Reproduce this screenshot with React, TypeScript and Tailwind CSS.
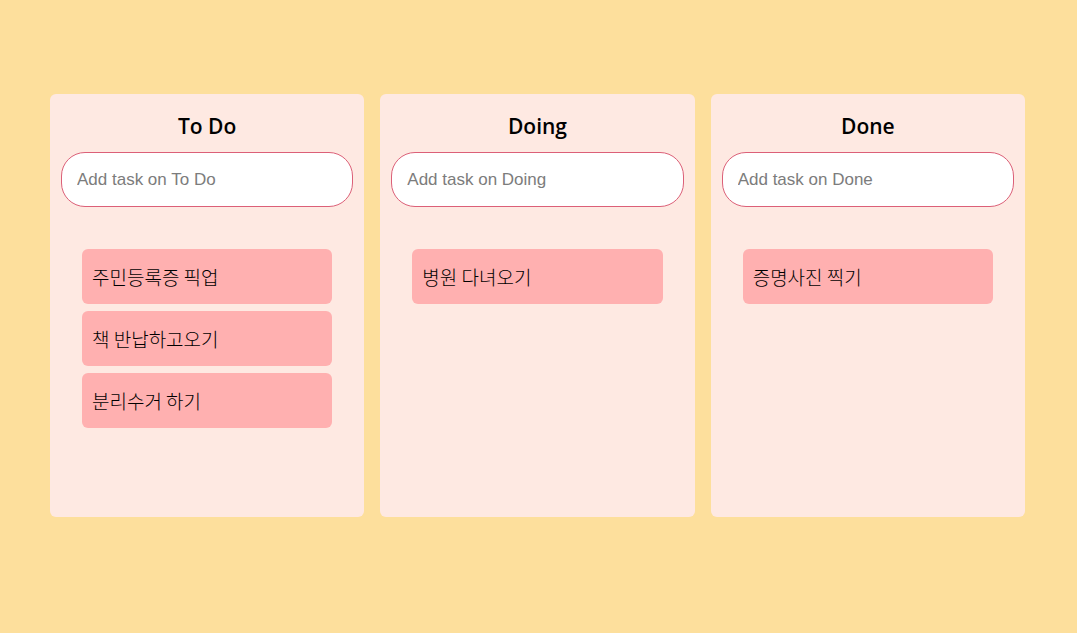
import { useState, type FormEvent } from "react";

type Board = { name: string; tasks: string[] };

const initialBoards: Board[] = [
  { name: "To Do", tasks: ["주민등록증 픽업", "책 반납하고오기", "분리수거 하기"] },
  { name: "Doing", tasks: ["병원 다녀오기"] },
  { name: "Done", tasks: ["증명사진 찍기"] },
];

function Column({ board, onAdd }: { board: Board; onAdd: (task: string) => void }) {
  const [text, setText] = useState("");
  const submit = (event: FormEvent) => {
    event.preventDefault();
    if (!text.trim()) return;
    onAdd(text.trim());
    setText("");
  };
  return (
    <section className="flex min-h-[423px] flex-col rounded-md bg-[#fee9e2] pt-4">
      <h2 className="text-center font-['Open_Sans','Noto_Sans_CJK_KR',sans-serif] text-[21px] leading-8 font-semibold text-black">
        {board.name}
      </h2>
      <form onSubmit={submit} className="px-[11px] pt-[10px]">
        <input
          type="text"
          aria-label={`Add task on ${board.name}`}
          placeholder={`Add task on ${board.name}`}
          value={text}
          onChange={(event) => setText(event.target.value)}
          className="block h-[55px] w-full rounded-[24px] border border-[#dc6078] bg-white px-[15px] font-['Liberation_Sans','Noto_Sans_CJK_KR',sans-serif] text-[17px] text-black outline-none placeholder:text-[#7c7c7c]"
        />
      </form>
      <ul className="flex grow flex-col gap-[7px] px-8 pt-[42px] pb-8">
        {board.tasks.map((task, index) => (
          <li key={index} className="rounded-md bg-[#ffb0b0] px-[10px] py-3 text-[19px] leading-[31px] font-light text-black">
            {task}
          </li>
        ))}
      </ul>
    </section>
  );
}

export default function App() {
  const [boards, setBoards] = useState(initialBoards);
  const addTask = (name: string, task: string) =>
    setBoards((current) =>
      current.map((board) => (board.name === name ? { ...board, tasks: [...board.tasks, task] } : board)),
    );
  return (
    <main className="flex min-h-screen items-center bg-[#fddf9c] pr-[52px] pb-[22px] pl-[50px] font-['Noto_Sans_CJK_KR',sans-serif]">
      <div className="grid w-full grid-cols-3 gap-4">
        {boards.map((board) => (
          <Column key={board.name} board={board} onAdd={(task) => addTask(board.name, task)} />
        ))}
      </div>
    </main>
  );
}
